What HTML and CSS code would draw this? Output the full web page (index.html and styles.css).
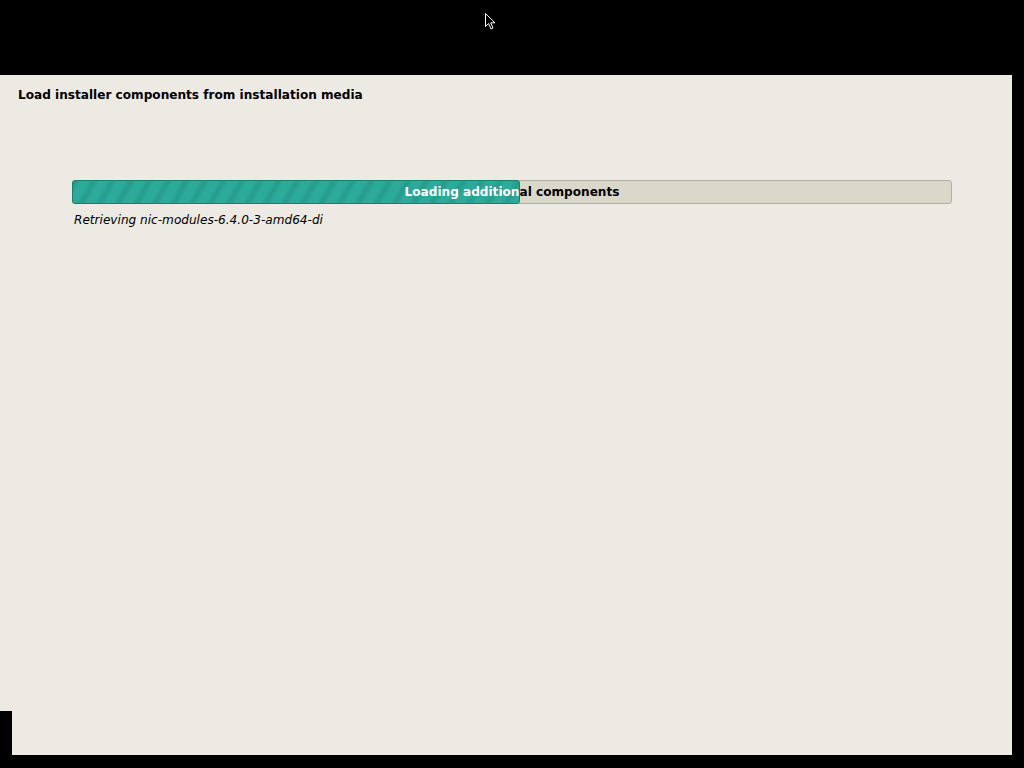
FILE: index.html
```html
<!DOCTYPE html>
<html>
<head>
<meta charset="utf-8">
<link rel="stylesheet" href="styles.css">
</head>
<body>
<div class="screen">
  <div class="topbar"></div>
  <div class="panel">
    <h1 class="title">Load installer components from installation media</h1>
    <div class="progress-area">
      <div class="bar">
        <div class="label dark">Loading additional components</div>
        <div class="fill" style="width: 448px;">
          <div class="label light">Loading additional components</div>
        </div>
      </div>
      <div class="status">Retrieving nic-modules-6.4.0-3-amd64-di</div>
    </div>
  </div>
  <div class="corner"></div>
  <svg class="cursor" width="12" height="18" viewBox="0 0 12 18">
    <path d="M0.5 0.5 L0.5 13.5 L3.5 10.5 L6 16 L8 15 L5.7 9.8 L10 9.8 Z" fill="#000" stroke="#fff" stroke-width="1"/>
  </svg>
</div>
</body>
</html>
```
FILE: styles.css
```css
html, body {
  margin: 0;
  padding: 0;
  background: #000;
}
.screen {
  position: relative;
  width: 1024px;
  height: 768px;
  background: #000;
  overflow: hidden;
}
.topbar {
  height: 75px;
}
.panel {
  width: 1012px;
  height: 680px;
  background: #edeae4;
  box-sizing: border-box;
  padding-top: 12px;
}
.title {
  margin: 0 0 0 18px;
  font-family: "DejaVu Sans", sans-serif;
  font-weight: bold;
  font-size: 12.1px;
  line-height: 16px;
  color: #000;
}
.progress-area {
  margin: 77px 0 0 72px;
  width: 880px;
}
.bar {
  position: relative;
  height: 24px;
  box-sizing: border-box;
  border: 1px solid #b3b0a5;
  border-radius: 3px;
  background: #dad7cb;
}
.label {
  width: 878px;
  height: 22px;
  line-height: 22px;
  text-align: center;
  font-family: "DejaVu Sans", sans-serif;
  font-weight: bold;
  font-size: 12.1px;
  white-space: nowrap;
}
.dark {
  color: #000;
}
.light {
  color: #fff;
}
.fill {
  position: absolute;
  left: -1px;
  top: -1px;
  height: 24px;
  box-sizing: border-box;
  border: 1px solid #1f7d70;
  border-radius: 3px;
  overflow: hidden;
  background-color: #2aa898;
  background-image: repeating-linear-gradient(-60deg, #2caa9a 0px, #2caa9a 6px, #259c8c 11px, #2caa9a 16px);
}
.status {
  margin: 8px 0 0 2px;
  font-family: "DejaVu Sans", sans-serif;
  font-style: italic;
  font-size: 12.1px;
  line-height: 16px;
  color: #000;
}
.corner {
  position: absolute;
  left: 0;
  top: 711px;
  width: 12px;
  height: 57px;
  background: #000;
}
.cursor {
  position: absolute;
  left: 485px;
  top: 13px;
}
```
